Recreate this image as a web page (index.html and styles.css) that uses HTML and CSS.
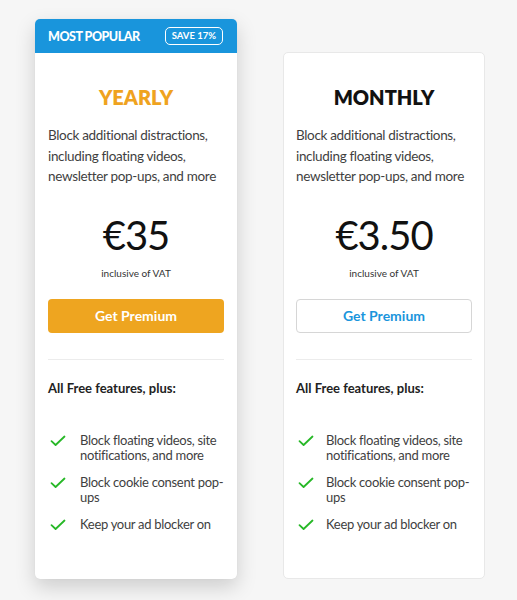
FILE: index.html
```html
<!DOCTYPE html>
<html>
<head>
<meta charset="utf-8">
<link rel="stylesheet" href="styles.css">
</head>
<body>
<div class="plans">
  <div class="card card--featured">
    <div class="card__banner">
      <span class="banner__label">MOST POPULAR</span>
      <span class="banner__badge">SAVE 17%</span>
    </div>
    <div class="card__body">
      <h2 class="plan-title plan-title--yearly">YEARLY</h2>
      <p class="plan-desc">Block additional distractions, including floating videos, newsletter pop-ups, and more</p>
      <div class="price">€35</div>
      <div class="vat">inclusive of VAT</div>
      <button class="cta cta--primary">Get Premium</button>
      <hr class="divider">
      <div class="features-head">All Free features, plus:</div>
      <ul class="features">
        <li><svg class="check" viewBox="0 0 16 12"><path d="M1.5 6.2 L5.6 10 L14.5 1.5"/></svg><span>Block floating videos, site notifications, and more</span></li>
        <li><svg class="check" viewBox="0 0 16 12"><path d="M1.5 6.2 L5.6 10 L14.5 1.5"/></svg><span>Block cookie consent pop-ups</span></li>
        <li><svg class="check" viewBox="0 0 16 12"><path d="M1.5 6.2 L5.6 10 L14.5 1.5"/></svg><span>Keep your ad blocker on</span></li>
      </ul>
    </div>
  </div>
  <div class="card card--plain">
    <div class="card__body">
      <h2 class="plan-title">MONTHLY</h2>
      <p class="plan-desc">Block additional distractions, including floating videos, newsletter pop-ups, and more</p>
      <div class="price">€3.50</div>
      <div class="vat">inclusive of VAT</div>
      <button class="cta cta--outline">Get Premium</button>
      <hr class="divider">
      <div class="features-head">All Free features, plus:</div>
      <ul class="features">
        <li><svg class="check" viewBox="0 0 16 12"><path d="M1.5 6.2 L5.6 10 L14.5 1.5"/></svg><span>Block floating videos, site notifications, and more</span></li>
        <li><svg class="check" viewBox="0 0 16 12"><path d="M1.5 6.2 L5.6 10 L14.5 1.5"/></svg><span>Block cookie consent pop-ups</span></li>
        <li><svg class="check" viewBox="0 0 16 12"><path d="M1.5 6.2 L5.6 10 L14.5 1.5"/></svg><span>Keep your ad blocker on</span></li>
      </ul>
    </div>
  </div>
</div>
</body>
</html>
```
FILE: styles.css
```css
* { box-sizing: border-box; }
html, body { margin: 0; padding: 0; }
body {
  background: #f6f6f6;
  font-family: "Lato", "Noto Sans", sans-serif;
  color: #3f3f3f;
  width: 517px;
  height: 600px;
  overflow: hidden;
}
.plans {
  display: flex;
  align-items: stretch;
  gap: 46px;
  padding: 19px 0 0 35px;
  height: 579px;
}
.card {
  width: 202px;
  background: #fff;
  border-radius: 5px;
  display: flex;
  flex-direction: column;
}
.card--featured {
  box-shadow: 0 8px 20px rgba(0,0,0,0.17), 0 0 1px rgba(0,0,0,0.1);
  overflow: hidden;
}
.card--plain {
  margin-top: 33px;
  border: 1px solid #e8e8e8;
  width: 202px;
}
.card__banner {
  height: 34px;
  background: #1995dc;
  display: flex;
  align-items: center;
  justify-content: space-between;
  padding: 0 14px 0 13px;
  color: #fff;
}
.banner__label {
  font-weight: 900;
  font-size: 12.5px;
  letter-spacing: -0.5px;
}
.banner__badge {
  font-size: 9.5px;
  font-weight: 700;
  border: 1px solid #fff;
  border-radius: 5px;
  padding: 3px 6px;
  line-height: 10px;
}
.card__body {
  padding: 32px 13px 0 13px;
  display: flex;
  flex-direction: column;
}
.card--plain .card__body { padding: 32px 12px 0 12px; }
.card--plain .check { margin-right: 12px; }
.plan-title {
  margin: 0;
  text-align: center;
  font-size: 20px;
  line-height: 24px;
  font-weight: 800;
  color: #111;
}
.plan-title--yearly { color: #efa31f; }
.plan-desc {
  margin: 16px 0 0 0;
  font-size: 13.5px;
  line-height: 20.5px;
  letter-spacing: -0.33px;
}
.price {
  margin-top: 23px;
  text-align: center;
  font-size: 40px;
  line-height: 50px;
  letter-spacing: -1px;
  color: #111;
  font-weight: 400;
}
.vat {
  margin-top: 6px;
  text-align: center;
  font-size: 10px;
  line-height: 14px;
  color: #333;
}
.cta {
  margin-top: 19px;
  height: 34px;
  border-radius: 4px;
  font-family: inherit;
  font-size: 14px;
  font-weight: 700;
  cursor: pointer;
  width: 100%;
}
.cta--primary {
  background: #eea520;
  border: none;
  color: #fff;
}
.cta--outline {
  background: #fff;
  border: 1px solid #d6d6d6;
  color: #1a95dc;
}
.divider {
  margin: 26px 0 0 0;
  border: none;
  border-top: 1px solid #ececec;
  height: 0;
}
.features-head {
  margin-top: 19px;
  font-size: 13px;
  font-weight: 700;
  line-height: 18px;
  color: #222;
}
.features {
  list-style: none;
  margin: 36px 0 0 0;
  padding: 0;
  display: flex;
  flex-direction: column;
  gap: 12px;
}
.features li {
  display: flex;
  align-items: flex-start;
  font-size: 13px;
  line-height: 15px;
  letter-spacing: -0.3px;
}
.check {
  width: 16px;
  height: 12px;
  margin: 2px 14px 0 2px;
  flex: none;
  fill: none;
  stroke: #27b827;
  stroke-width: 1.8;
  stroke-linecap: round;
  stroke-linejoin: round;
}
```
